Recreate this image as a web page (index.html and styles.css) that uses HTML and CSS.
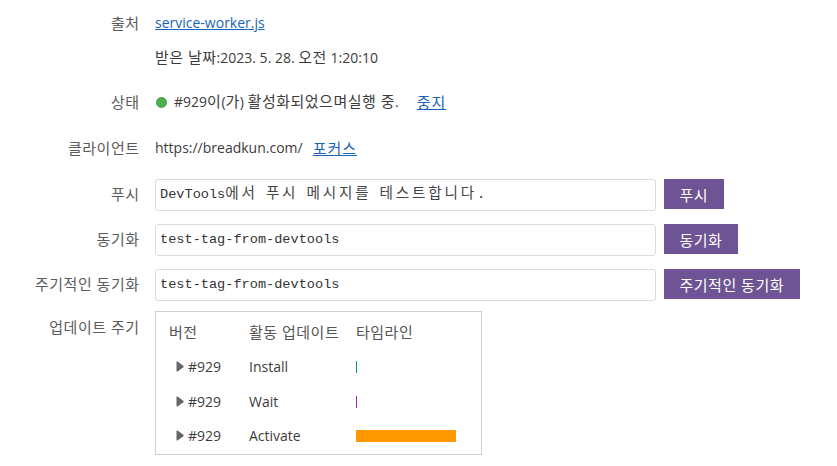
FILE: index.html
```html
<!DOCTYPE html>
<html lang="ko">
<head>
<meta charset="utf-8">
<link rel="stylesheet" href="styles.css">
</head>
<body>
<div class="sw">
  <div class="label row-src">출처</div>
  <div class="value row-src">
    <a class="link" href="#">service-worker.js</a>
    <div class="date"><span class="ko">받은 날짜</span>:2023. 5. 28. <span class="ko">오전</span> 1:20:10</div>
  </div>

  <div class="label row-status">상태</div>
  <div class="value row-status">
    <span class="dot"></span><span>#929<span class="ko">이</span>(<span class="ko">가</span>) <span class="ko">활성화되었으며실행 중</span>.</span><a class="link action stop ko" href="#">중지</a>
  </div>

  <div class="label row-client">클라이언트</div>
  <div class="value row-client">
    <span>https://breadkun.com/</span><a class="link action ko" href="#">포커스</a>
  </div>

  <div class="label row-input row-push">푸시</div>
  <div class="value row-input row-push">
    <div class="field">DevTools<span class="mko">에서</span> <span class="mko">푸시</span> <span class="mko">메시지를</span> <span class="mko">테스트합니다</span>.</div>
    <button class="btn">푸시</button>
  </div>

  <div class="label row-input">동기화</div>
  <div class="value row-input">
    <div class="field">test-tag-from-devtools</div>
    <button class="btn">동기화</button>
  </div>

  <div class="label row-input">주기적인 동기화</div>
  <div class="value row-input">
    <div class="field">test-tag-from-devtools</div>
    <button class="btn">주기적인 동기화</button>
  </div>

  <div class="label row-cycle">업데이트 주기</div>
  <div class="value row-cycle">
    <div class="cycle">
      <div class="cycle-row head">
        <div class="c-ver ko">버전</div>
        <div class="c-act ko">활동 업데이트</div>
        <div class="c-tl ko">타임라인</div>
      </div>
      <div class="cycle-row">
        <div class="c-ver"><svg class="tri" width="8" height="11" viewBox="0 0 8 11"><path d="M0.5 1.2 Q0.5 0 1.6 0.6 L7.3 4.8 Q8 5.5 7.3 6.2 L1.6 10.4 Q0.5 11 0.5 9.8 Z" fill="#666"/></svg>#929</div>
        <div class="c-act">Install</div>
        <div class="c-tl"><span class="bar install"></span></div>
      </div>
      <div class="cycle-row">
        <div class="c-ver"><svg class="tri" width="8" height="11" viewBox="0 0 8 11"><path d="M0.5 1.2 Q0.5 0 1.6 0.6 L7.3 4.8 Q8 5.5 7.3 6.2 L1.6 10.4 Q0.5 11 0.5 9.8 Z" fill="#666"/></svg>#929</div>
        <div class="c-act">Wait</div>
        <div class="c-tl"><span class="bar wait"></span></div>
      </div>
      <div class="cycle-row last">
        <div class="c-ver"><svg class="tri" width="8" height="11" viewBox="0 0 8 11"><path d="M0.5 1.2 Q0.5 0 1.6 0.6 L7.3 4.8 Q8 5.5 7.3 6.2 L1.6 10.4 Q0.5 11 0.5 9.8 Z" fill="#666"/></svg>#929</div>
        <div class="c-act">Activate</div>
        <div class="c-tl"><span class="bar activate"></span></div>
      </div>
    </div>
  </div>
</div>
</body>
</html>
```

FILE: styles.css
```css
html, body {
  margin: 0;
  padding: 0;
  background: #fff;
}

body {
  font-family: "Open Sans", "Noto Sans CJK KR", sans-serif;
  font-size: 14px;
  line-height: 20px;
  color: #3c3c3c;
}

.ko {
  font-size: 15px;
  line-height: 14px;
  letter-spacing: 0.5px;
}

.sw {
  display: grid;
  grid-template-columns: 139px 1fr;
  column-gap: 16px;
  padding-top: 13px;
}

.label {
  text-align: right;
  color: #5c5c5c;
  white-space: nowrap;
  font-size: 15px;
  letter-spacing: 0.5px;
  margin-right: -0.5px;
}

.link {
  color: #1a62b8;
  text-decoration: underline;
}

.row-src .date {
  margin-top: 15px;
}

.row-status {
  margin-top: 24px;
}

.value.row-status {
  display: flex;
  align-items: center;
  white-space: nowrap;
}

.dot {
  width: 11px;
  height: 11px;
  border-radius: 50%;
  background: #4caf50;
  border: 1px solid #43a047;
  box-sizing: border-box;
  margin: 0 7px 0 1px;
  flex: none;
}

.action {
  margin-left: 10px;
  letter-spacing: 1px;
}

.action.stop {
  margin-left: 18px;
}

.row-client {
  margin-top: 26px;
}

.value.row-client {
  display: flex;
  align-items: center;
  white-space: nowrap;
}

.row-input {
  margin-top: 13px;
}

.row-push {
  margin-top: 21px;
}

.label.row-input {
  line-height: 31px;
}

.value.row-input {
  display: flex;
  align-items: flex-start;
  gap: 8px;
}

.field {
  box-sizing: border-box;
  width: 501px;
  height: 32px;
  padding: 0 4px;
  border: 1px solid #dcdcdc;
  border-radius: 3px;
  font-family: "Liberation Mono", "Noto Sans CJK KR", monospace;
  font-size: 13.6px;
  line-height: 30px;
  color: #333;
  background: #fff;
  white-space: pre;
  overflow: hidden;
}

.mko {
  font-family: "Noto Sans CJK KR", sans-serif;
  font-size: 14.6px;
  line-height: 14px;
  letter-spacing: 2.8px;
  color: #444;
}

.btn {
  height: 30px;
  margin: 0;
  padding: 0 15.5px;
  border: none;
  background: #6e5494;
  color: #fff;
  font-family: "Open Sans", "Noto Sans CJK KR", sans-serif;
  font-size: 15px;
  letter-spacing: 0.5px;
  white-space: nowrap;
}

.row-cycle {
  margin-top: 10px;
}

.label.row-cycle {
  padding-top: 6px;
}

.cycle {
  box-sizing: border-box;
  width: 327px;
  border: 1px solid #cfcfcf;
  padding: 3px 0 0 13px;
}

.cycle-row {
  display: flex;
  align-items: center;
  height: 35px;
  white-space: nowrap;
}

.cycle-row.head {
  height: 34px;
  color: #555;
}

.cycle-row.last {
  height: 33px;
  padding-bottom: 2px;
}

.c-ver {
  width: 80px;
  display: flex;
  align-items: center;
}

.cycle-row:not(.head) .c-ver {
  padding-left: 7px;
  box-sizing: border-box;
}

.c-act {
  width: 107px;
}

.c-tl {
  display: flex;
  align-items: center;
}

.tri {
  display: block;
  margin-right: 4px;
  flex: none;
}

.bar {
  display: block;
  height: 12px;
}

.bar.install {
  width: 1px;
  background: #009688;
}

.bar.wait {
  width: 1px;
  background: #9c27b0;
}

.bar.activate {
  width: 100px;
  background: #ff9800;
}
```
